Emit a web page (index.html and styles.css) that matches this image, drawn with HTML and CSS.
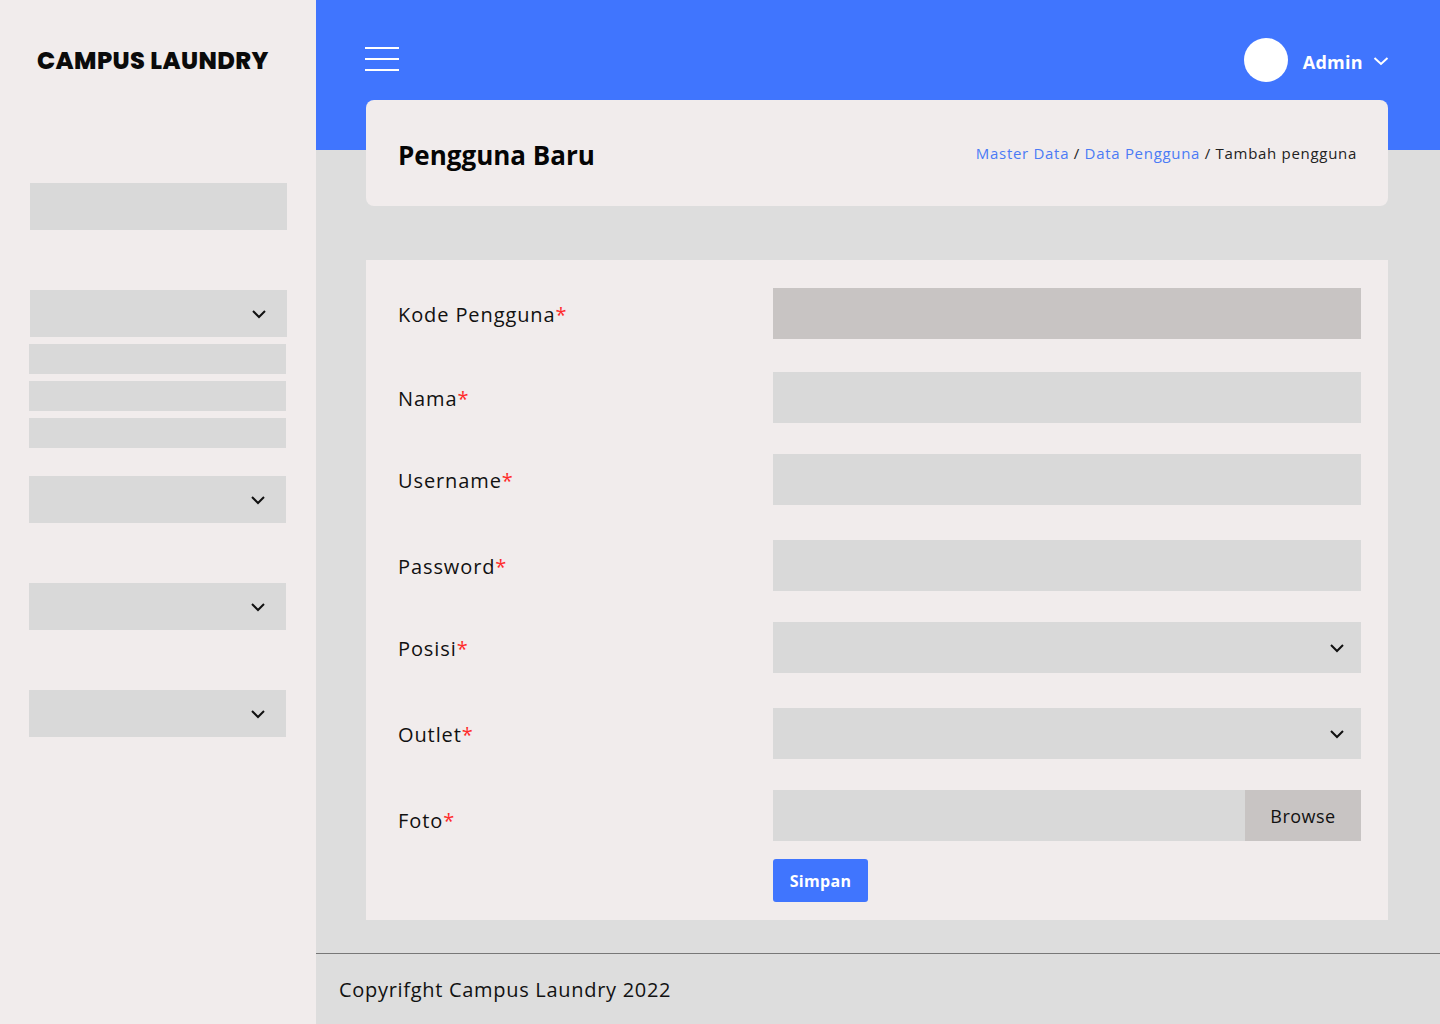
FILE: index.html
```html
<!DOCTYPE html>
<html lang="id">
<head>
<meta charset="utf-8">
<title>Campus Laundry - Pengguna Baru</title>
<link rel="stylesheet" href="styles.css">
</head>
<body>
<aside class="sidebar">
  <div class="logo">CAMPUS LAUNDRY</div>
  <div class="nav-box nav-first"></div>
  <div class="nav-box nav-drop nav-group1">
    <svg class="chev" width="16" height="10" viewBox="0 0 16 10"><path d="M2 2 L8 8 L14 2" fill="none" stroke="#111" stroke-width="2"/></svg>
  </div>
  <div class="nav-sub nav-sub-first"></div>
  <div class="nav-sub"></div>
  <div class="nav-sub"></div>
  <div class="nav-box nav-drop nav-group2">
    <svg class="chev" width="16" height="10" viewBox="0 0 16 10"><path d="M2 2 L8 8 L14 2" fill="none" stroke="#111" stroke-width="2"/></svg>
  </div>
  <div class="nav-box nav-drop nav-group3">
    <svg class="chev" width="16" height="10" viewBox="0 0 16 10"><path d="M2 2 L8 8 L14 2" fill="none" stroke="#111" stroke-width="2"/></svg>
  </div>
  <div class="nav-box nav-drop nav-group4">
    <svg class="chev" width="16" height="10" viewBox="0 0 16 10"><path d="M2 2 L8 8 L14 2" fill="none" stroke="#111" stroke-width="2"/></svg>
  </div>
</aside>
<main class="main">
  <header class="topbar">
    <div class="burger">
      <span></span><span></span><span></span>
    </div>
    <div class="user">
      <div class="avatar"></div>
      <span class="user-name">Admin</span>
      <svg class="user-chev" width="16" height="10" viewBox="0 0 16 10"><path d="M1.5 2 L8 8 L14.5 2" fill="none" stroke="#fff" stroke-width="2"/></svg>
    </div>
  </header>
  <section class="title-card">
    <h1 class="page-title">Pengguna Baru</h1>
    <nav class="crumbs">
      <a class="crumb-link">Master Data</a> / <a class="crumb-link">Data Pengguna</a> / <span>Tambah pengguna</span>
    </nav>
  </section>
  <section class="form-card">
    <div class="row row-1">
      <label class="label">Kode Pengguna<span class="req">*</span></label>
      <div class="field field-readonly"></div>
    </div>
    <div class="row row-2">
      <label class="label">Nama<span class="req">*</span></label>
      <div class="field"></div>
    </div>
    <div class="row row-3">
      <label class="label">Username<span class="req">*</span></label>
      <div class="field"></div>
    </div>
    <div class="row row-4">
      <label class="label">Password<span class="req">*</span></label>
      <div class="field"></div>
    </div>
    <div class="row row-5">
      <label class="label">Posisi<span class="req">*</span></label>
      <div class="field field-select">
        <svg width="16" height="10" viewBox="0 0 16 10"><path d="M2 2 L8 8 L14 2" fill="none" stroke="#111" stroke-width="2"/></svg>
      </div>
    </div>
    <div class="row row-6">
      <label class="label">Outlet<span class="req">*</span></label>
      <div class="field field-select">
        <svg width="16" height="10" viewBox="0 0 16 10"><path d="M2 2 L8 8 L14 2" fill="none" stroke="#111" stroke-width="2"/></svg>
      </div>
    </div>
    <div class="row row-7 row-file">
      <label class="label">Foto<span class="req">*</span></label>
      <div class="field field-file"><span class="browse">Browse</span></div>
    </div>
    <div class="actions">
      <button class="btn-save">Simpan</button>
    </div>
  </section>
  <footer class="footer">Copyrifght Campus Laundry 2022</footer>
</main>
</body>
</html>
```

FILE: styles.css
```css
* { box-sizing: border-box; }
html, body { margin: 0; padding: 0; }
body {
  display: flex;
  width: 1440px;
  height: 1024px;
  font-family: "Open Sans", "Noto Sans", sans-serif;
  color: #111;
  overflow: hidden;
}

/* Sidebar */
.sidebar {
  width: 316px;
  flex: 0 0 316px;
  height: 1024px;
  background: #F1ECEC;
  display: flex;
  flex-direction: column;
  padding-left: 29px;
}
.logo {
  font-family: "Poppins", "Open Sans", sans-serif;
  font-weight: 800;
  font-size: 24px;
  line-height: 30px;
  letter-spacing: 0.4px;
  margin: 46px 0 0 8px;
  color: #0b0b0b;
}
.nav-box {
  width: 257px;
  height: 47px;
  background: #D9D9D9;
  flex: 0 0 auto;
}
.nav-first { margin-top: 107px; margin-left: 1px; }
.nav-drop {
  display: flex;
  align-items: center;
  justify-content: flex-end;
  padding-right: 20px;
}
.nav-group1 { margin-top: 60px; margin-left: 1px; }
.nav-group2 { margin-top: 28px; }
.nav-group3 { margin-top: 60px; }
.nav-group4 { margin-top: 60px; }
.nav-sub {
  width: 257px;
  height: 30px;
  background: #D9D9D9;
  margin-top: 7px;
}
.chev { display: block; }

/* Main */
.main {
  flex: 1;
  height: 1024px;
  display: flex;
  flex-direction: column;
  background: linear-gradient(to bottom, #4075FE 0, #4075FE 150px, #DDDDDD 150px);
  padding: 0 52px 0 50px;
}
.topbar {
  height: 100px;
  display: flex;
  align-items: center;
  justify-content: space-between;
}
.burger {
  width: 34px;
  display: flex;
  flex-direction: column;
  gap: 9px;
  margin-left: -1px;
  margin-top: 17px;
}
.burger span {
  display: block;
  height: 2px;
  background: #fff;
}
.user {
  display: flex;
  align-items: center;
  margin-right: -1px;
  margin-top: 20px;
}
.avatar {
  width: 44px;
  height: 44px;
  border-radius: 50%;
  background: #fff;
  margin-right: 15px;
}
.user-name {
  color: #fff;
  font-weight: 700;
  font-size: 18px;
  letter-spacing: 0.3px;
  margin-right: 10px;
  margin-top: 4px;
}
.user-chev { margin-top: 2px; }

.title-card {
  height: 106px;
  background: #F1ECEC;
  border-radius: 8px;
  display: flex;
  align-items: center;
  justify-content: space-between;
  padding: 0 31px 0 32px;
}
.page-title {
  margin: 4px 0 0;
  font-size: 26px;
  font-weight: 700;
  color: #050505;
}
.crumbs {
  font-size: 15px;
  letter-spacing: 0.7px;
  color: #222;
  margin-top: 0;
}
.crumb-link { color: #4B7BF5; }

.form-card {
  margin-top: 54px;
  height: 660px;
  background: #F1ECEC;
  padding: 28px 27px 0 32px;
  display: flex;
  flex-direction: column;
}
.row {
  display: flex;
  align-items: center;
  height: 51px;
}
.row-2 { margin-top: 33px; }
.row-3 { margin-top: 31px; }
.row-4 { margin-top: 35px; }
.row-5 { margin-top: 31px; }
.row-6 { margin-top: 35px; }
.row-7 { margin-top: 31px; }
.label {
  width: 375px;
  flex: 0 0 375px;
  font-size: 20px;
  letter-spacing: 0.9px;
  color: #111;
  padding-top: 2px;
}
.row-file .label { padding-top: 10px; }
.req { color: #FF2B2B; }
.field {
  flex: 1;
  height: 51px;
  background: #D9D9D9;
}
.field-readonly { background: #C8C4C3; }
.field-select {
  display: flex;
  align-items: center;
  justify-content: flex-end;
  padding-right: 16px;
}
.field-file {
  display: flex;
  justify-content: flex-end;
}
.browse {
  width: 116px;
  height: 51px;
  background: #C8C4C3;
  display: flex;
  align-items: center;
  justify-content: center;
  font-size: 18px;
  letter-spacing: 0.5px;
  color: #111;
}
.actions {
  margin-top: 18px;
  padding-left: 375px;
}
.btn-save {
  width: 95px;
  height: 43px;
  background: #4075FE;
  border: none;
  border-radius: 3px;
  color: #fff;
  font-family: inherit;
  font-weight: 700;
  font-size: 16px;
  letter-spacing: 0.3px;
  padding: 0;
}

.footer {
  margin: 33px -52px 0 -50px;
  border-top: 1px solid #777;
  height: 71px;
  display: flex;
  align-items: center;
  padding-left: 23px;
  font-size: 20px;
  letter-spacing: 0.7px;
  color: #111;
}
```
